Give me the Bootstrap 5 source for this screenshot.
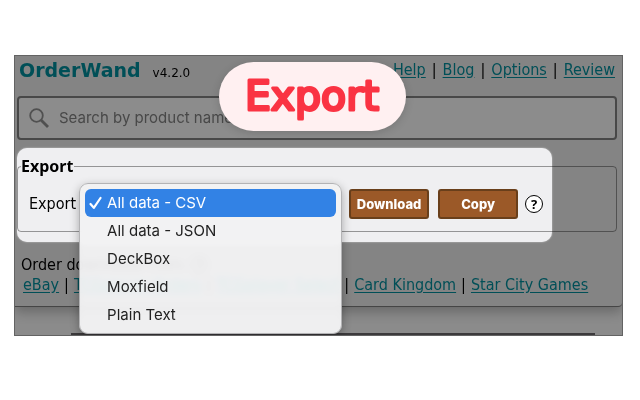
<!DOCTYPE html>
<html lang="en">
<head>
<meta charset="utf-8">
<meta name="viewport" content="width=device-width, initial-scale=1">
<title>OrderWand</title>
<link href="https://cdn.jsdelivr.net/npm/bootstrap@5.3.0/dist/css/bootstrap.min.css" rel="stylesheet">
<style>
body{background:#fff;color:#000;font:16px/20px "DejaVu Sans Condensed","DejaVu Sans",sans-serif}
.stage{margin:55px 17px 0 14px;background:#8b8b8b;border:1px solid #636363;overflow:hidden}
.panel{background:#848484;border-bottom:1px solid #454545;border-radius:0 0 4px 0;box-shadow:0 5px 12px rgba(0,0,0,.25);padding:0 5px 11px 2px}
.topbar{height:40px;padding:4px 2px 0}
.brand{font:700 19px/20px "DejaVu Sans",sans-serif;color:#004f57;margin:0}
.version{font:12px/20px "DejaVu Sans",sans-serif;margin-left:12px}
.links{white-space:nowrap;gap:6px}
.links a{color:#004f57;text-underline-offset:2px}
.search-box{height:44px;background:#8c8c8c;border:2px solid #484848;border-radius:4px;padding:0 10px}
.search-box svg{width:20px;height:20px;flex:none}
.search-box input{background:none;border:0;padding:0;margin-left:10px;font:15px/20px Inter,sans-serif;outline:0;min-width:0}
.search-box input::placeholder{color:#484848;opacity:1}
.pill{left:204px;top:6px;width:187px;height:69px;border-radius:35px;background:#fff0f1;z-index:5;box-shadow:0 2px 8px rgba(0,0,0,.15)}
.pill svg{display:block;width:100%;height:100%}
.pill text{font:400 41px "DejaVu Sans",sans-serif;fill:#fa3343;stroke:#fa3343;stroke-width:3px;stroke-linejoin:round}
.spot{margin:8px 0 0;padding:8px 0 11px}
.spot::before{content:"";position:absolute;left:0;top:0;bottom:1px;width:535px;background:#efeff1;border-radius:10px;box-shadow:0 0 2px rgba(255,255,255,.6)}
.group{position:relative;border:1px solid rgba(0,0,0,.38);border-radius:4px;height:76px;padding:0 11px;margin:0}
.group legend{float:none;width:auto;font:700 16px/20px "Noto Sans",sans-serif;margin:0 0 0 -8px;padding:0 1px 0 0}
.controls{height:30px;margin-top:13px}
.format{width:263px;margin:0 7px 0 3px}
.format select{font-size:14px;height:24px;width:100%}
.menu{left:0;top:-9px;width:263px;padding:5px 5px 4px;border-radius:9px;border:1px solid #b3b3b5;background:rgba(241,241,242,.94);backdrop-filter:blur(3px) saturate(2) brightness(1.5);box-shadow:0 3px 10px rgba(0,0,0,.3);z-index:4}
.menu button{display:flex;align-items:center;width:100%;height:28px;border:0;border-radius:6px;background:none;color:#222;padding:0 0 0 4px;font:15px/28px Inter,sans-serif;text-align:left}
.menu button[aria-selected=true]{background:#3282e5;color:#fff}
.menu svg{width:13px;height:14px;margin-right:5px}
.act{width:80px;height:30px;padding:0;border:2px solid #693f1b;border-radius:3px;background:#9b5928;color:#fff;font:800 13px/20px Inter,sans-serif;margin-right:9px}
.hint{width:18px;height:18px;padding:0;border:1px solid #000;border-radius:50%;background:#fff;color:#000;font:700 13px/16px "Noto Sans",sans-serif;margin-left:-2px}
.hint-dim{background:none;margin-left:4px}
.orders{padding:12px 6px 0 4px}
.orders .links{padding-left:2px;gap:5px}
.rest{height:28px}
.edge{height:2px;background:#3c3a3c;margin:26px 27px 0 56px}
</style>
<script src="https://cdn.jsdelivr.net/npm/bootstrap@5.3.0/dist/js/bootstrap.bundle.min.js"></script>
</head>
<body>
<main class="stage position-relative">
  <div class="panel">
    <header class="topbar d-flex justify-content-between align-items-start">
      <div class="d-flex align-items-baseline"><h1 class="brand">OrderWand</h1><span class="version">v4.2.0</span></div>
      <nav class="links d-flex"><a href="#">Help</a><span>|</span><a href="#">Blog</a><span>|</span><a href="#">Options</a><span>|</span><a href="#">Review</a></nav>
    </header>
    <div class="search-box d-flex align-items-center">
      <svg viewBox="0 0 20 20" fill="none" stroke="#505050" aria-hidden="true"><circle cx="7.5" cy="7.5" r="6.3" stroke-width="1.8"/><path d="M12 12L19 19" stroke-width="2.8"/></svg>
      <input class="flex-grow-1" type="search" placeholder="Search by product name" aria-label="Search by product name">
    </div>
    <section class="spot position-relative">
      <fieldset class="group">
        <legend>Export</legend>
        <div class="controls d-flex align-items-center">
          <label for="format">Export</label>
          <div class="format position-relative">
            <select id="format"><option>All data - CSV</option><option>All data - JSON</option><option>DeckBox</option><option>Moxfield</option><option>Plain Text</option></select>
            <div class="menu position-absolute" role="listbox" aria-label="Export format">
              <button type="button" role="option" aria-selected="true"><svg viewBox="0 0 13 14" fill="none" stroke="#fff" stroke-width="2.2" stroke-linecap="round" stroke-linejoin="round" aria-hidden="true"><path d="M1.5 8L4.8 11.8L11.5 2"/></svg>All data - CSV</button>
              <button type="button" role="option"><svg></svg>All data - JSON</button>
              <button type="button" role="option"><svg></svg>DeckBox</button>
              <button type="button" role="option"><svg></svg>Moxfield</button>
              <button type="button" role="option"><svg></svg>Plain Text</button>
            </div>
          </div>
          <button class="act" type="button">Download</button>
          <button class="act" type="button">Copy</button>
          <button class="hint" type="button" aria-label="Export help">?</button>
        </div>
      </fieldset>
    </section>
    <section class="orders">
      <div class="d-flex align-items-center">Order downloads from:<button class="hint hint-dim" type="button" aria-label="Download help">?</button></div>
      <nav class="links d-flex"><a href="#">eBay</a><span>|</span><a href="#">TCGplayer Orders</a><span>|</span><a href="#">TCGplayer Select</a><span>|</span><a href="#">Card Kingdom</a><span>|</span><a href="#">Star City Games</a></nav>
    </section>
  </div>
  <div class="rest d-flow-root overflow-hidden"><div class="edge"></div></div>
  <div class="pill position-absolute"><svg viewBox="0 0 187 69" role="img" aria-label="Export"><text x="93" y="48" text-anchor="middle">Export</text></svg></div>
</main>
</body>
</html>
